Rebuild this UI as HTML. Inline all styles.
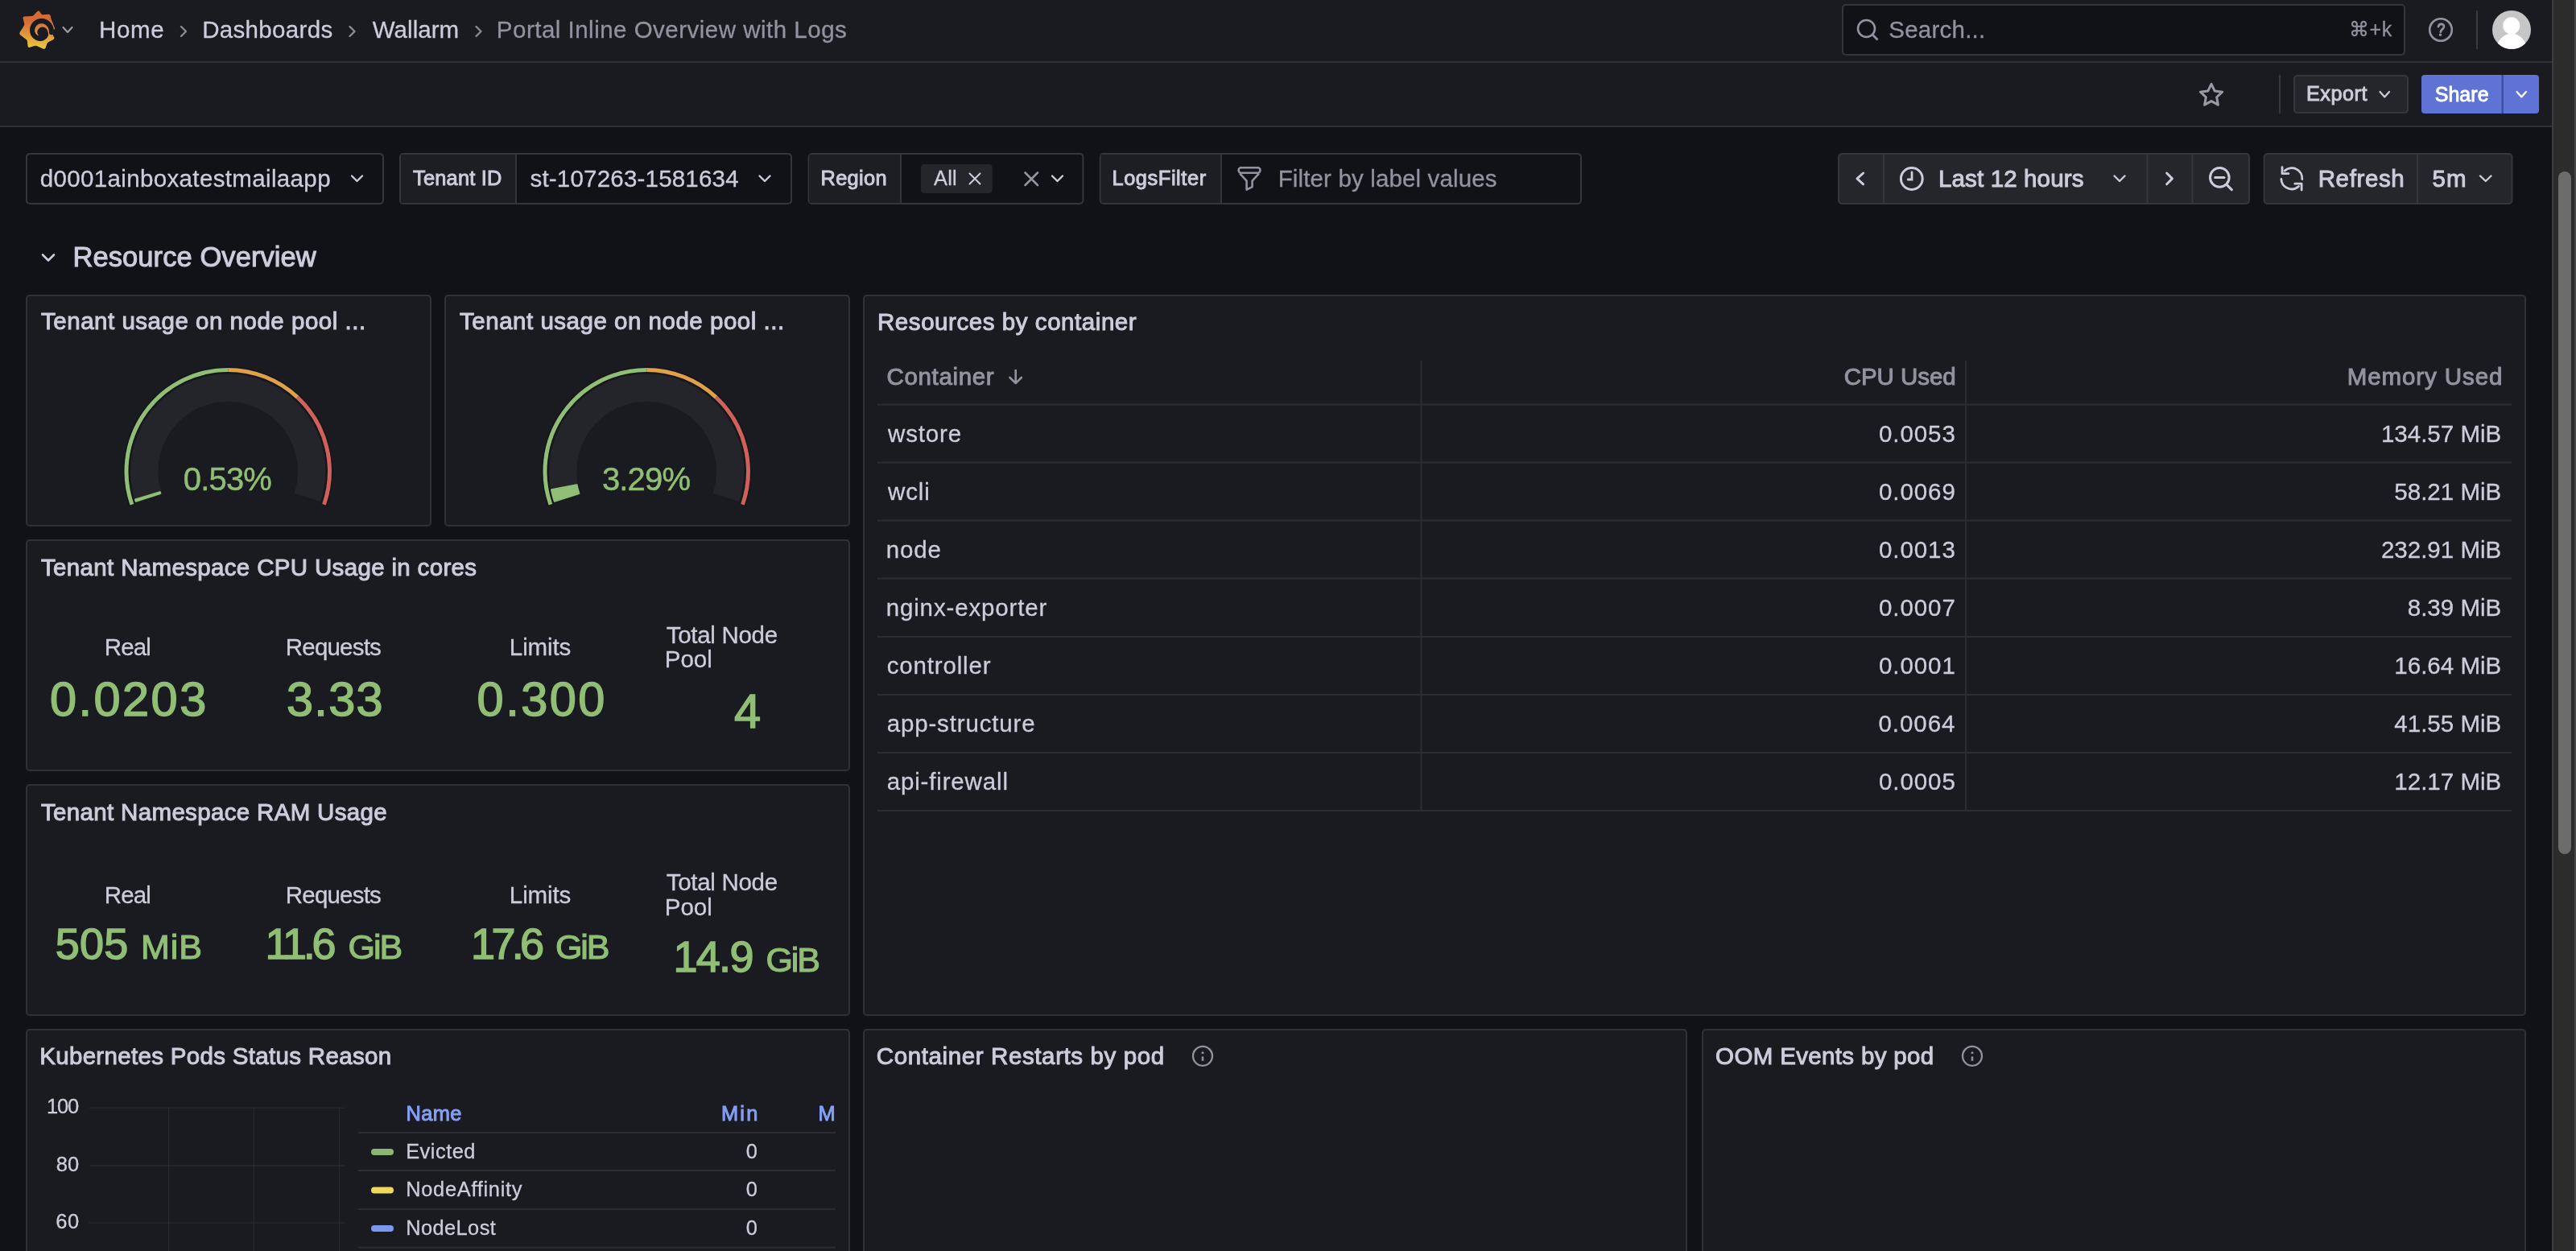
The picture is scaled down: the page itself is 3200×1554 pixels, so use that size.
<!DOCTYPE html>
<html><head><meta charset="utf-8"><title>Portal Inline Overview with Logs - Dashboards - Grafana</title>
<style>html,body{margin:0;padding:0;background:#111217;overflow:hidden}
svg{display:block;width:100vw;height:auto;will-change:transform} text{font-family:"Liberation Sans",sans-serif;white-space:pre}</style></head>
<body><svg width="3200" height="1554" viewBox="0 0 3200 1554">
<rect x="0.00" y="0.00" width="3200.00" height="1554.00" rx="0" fill="#111217"/>
<rect x="0.00" y="0.00" width="3170.00" height="76.00" rx="0" fill="#1a1b20"/>
<rect x="0.00" y="76.00" width="3170.00" height="2.00" rx="0" fill="#303137"/>
<rect x="0.00" y="78.00" width="3170.00" height="78.00" rx="0" fill="#1a1b20"/>
<rect x="0.00" y="156.00" width="3170.00" height="2.00" rx="0" fill="#303137"/>
<defs><linearGradient id="lg" x1="0" y1="0" x2="0" y2="1"><stop offset="0.25" stop-color="#d46a35"/><stop offset="0.55" stop-color="#dc9038"/><stop offset="1" stop-color="#ebcb3c"/></linearGradient></defs>
<path d="M46.24,14.27 Q48.05,12.40 49.45,14.59 L51.09,17.14 Q51.90,18.40 53.40,18.29 L60.01,17.78 Q62.40,17.60 62.82,19.96 L63.19,22.02 Q63.40,23.20 63.83,24.32 L68.01,35.05 Q68.30,35.80 68.00,36.54 L65.78,41.97 Q65.40,42.90 65.88,43.78 L67.04,45.90 Q68.20,48.00 66.08,49.13 L60.12,52.30 Q58.80,53.00 58.31,54.42 L56.66,59.15 Q55.80,61.60 53.43,60.54 L45.57,57.01 Q44.20,56.40 42.78,56.88 L37.07,58.83 Q34.80,59.60 34.55,57.21 L33.96,51.49 Q33.80,50.00 32.61,49.09 L25.30,43.46 Q23.40,42.00 24.69,39.98 L29.79,31.97 Q30.60,30.70 30.23,29.25 L28.60,22.92 Q28.00,20.60 30.40,20.49 L39.20,20.07 Q40.70,20.00 41.74,18.92 Z" fill="url(#lg)"/>
<path d="M63.98,40.08 L63.96,38.96 L63.87,37.86 L63.74,36.77 L63.51,35.71 L63.19,34.67 L62.78,33.66 L62.29,32.70 L61.73,31.78 L61.12,30.90 L60.44,30.07 L59.69,29.30 L58.87,28.61 L58.00,27.98 L57.07,27.44 L56.11,26.98 L55.10,26.60 L54.07,26.32 L53.01,26.12 L51.94,26.02 L50.87,26.03 L49.81,26.18 L48.77,26.41 L47.76,26.74 L46.79,27.14 L45.87,27.63 L44.99,28.20 L44.17,28.84 L43.41,29.54 L42.72,30.30 L42.11,31.12 L41.57,31.98 L41.11,32.88 L40.73,33.81 L40.44,34.77 L40.23,35.74 L40.11,36.73 L40.08,37.71 L40.14,38.69 L40.31,39.65 L40.55,40.58 L40.88,41.49 L41.28,42.35 L41.75,43.17 L42.28,43.93 L42.88,44.64 L43.53,45.29 L44.23,45.88 L44.97,46.40 L45.75,46.84 L46.56,47.22 L47.39,47.51 L48.23,47.73 L49.09,47.88 L49.94,47.95 L50.79,47.94 L51.63,47.81 L52.43,47.54 L53.19,47.20 L53.90,46.80 L54.55,46.34 L55.14,45.84 L55.68,45.30 L56.14,44.73 L56.54,44.12 L56.88,43.50 L57.02,42.77 L56.89,41.93 L56.65,41.14 L56.33,40.43 L55.92,39.80" fill="none" stroke="#1a1b20" stroke-width="6.2" stroke-linecap="round" stroke-linejoin="round"/>
<circle cx="52.8" cy="40.0" r="6.5" fill="#1a1b20"/>
<path d="M63.23,37.05 L72.18,36.10 L71.38,44.44 L62.99,41.00Z" fill="#1a1b20"/>
<path d="M78.5,34 L84.0,40 L89.5,34" fill="none" stroke="#9a9aa6" stroke-width="2.2" stroke-linecap="round" stroke-linejoin="round"/>
<text x="123.05" y="47.00" font-size="29.5" letter-spacing="0.603" fill="#ccccdc" stroke="#ccccdc" stroke-width="0.3">Home</text>
<path d="M225,33 L231,39.0 L225,45" fill="none" stroke="#8a8a96" stroke-width="2.4" stroke-linecap="round" stroke-linejoin="round"/>
<text x="251.15" y="47.00" font-size="29.5" letter-spacing="0.340" fill="#ccccdc" stroke="#ccccdc" stroke-width="0.3">Dashboards</text>
<path d="M434.5,33 L440.5,39.0 L434.5,45" fill="none" stroke="#8a8a96" stroke-width="2.4" stroke-linecap="round" stroke-linejoin="round"/>
<text x="462.75" y="47.00" font-size="29.5" letter-spacing="0.060" fill="#ccccdc" stroke="#ccccdc" stroke-width="0.3">Wallarm</text>
<path d="M591.5,33 L597.5,39.0 L591.5,45" fill="none" stroke="#8a8a96" stroke-width="2.4" stroke-linecap="round" stroke-linejoin="round"/>
<text x="616.85" y="47.00" font-size="29.5" letter-spacing="0.490" fill="#9292a0" stroke="#9292a0" stroke-width="0.3">Portal Inline Overview with Logs</text>
<rect x="2289.00" y="6.00" width="698.00" height="62.00" rx="4" fill="#111217" stroke="#35363c" stroke-width="2"/>
<circle cx="2318.5" cy="35.5" r="10.5" fill="none" stroke="#9292a0" stroke-width="2.6"/>
<line x1="2326" y1="43" x2="2332.5" y2="49.5" stroke="#9292a0" stroke-width="2.8"/>
<text x="2346.23" y="46.60" font-size="29.5" letter-spacing="0.241" fill="#9292a0" stroke="#9292a0" stroke-width="0.3">Search...</text>
<text x="2917.73" y="45.00" font-size="25" letter-spacing="0.667" fill="#9292a0" stroke="#9292a0" stroke-width="0.3">⌘+k</text>
<circle cx="3032" cy="37" r="13.8" fill="none" stroke="#9292a0" stroke-width="2.6"/>
<path d="M3029,33.2 Q3029.6,29.9 3032.6,29.9 Q3036,30 3035.9,33 Q3035.7,35.2 3033.6,36.6 Q3032.3,37.6 3031.8,39.8" fill="none" stroke="#9292a0" stroke-width="2.7" stroke-linecap="round"/>
<circle cx="3031.5" cy="43.2" r="1.7" fill="#9292a0"/>
<rect x="3076.00" y="13.00" width="2.00" height="48.00" rx="0" fill="#3a3b41"/>
<circle cx="3120" cy="37" r="24" fill="#c6c6c6"/>
<clipPath id="av"><circle cx="3120" cy="37" r="24"/></clipPath>
<g clip-path="url(#av)"><circle cx="3119.8" cy="31.9" r="10.6" fill="#fff"/><ellipse cx="3120" cy="62" rx="18.6" ry="20.4" fill="#fff"/></g>
<path d="M2747.00,104.30 L2751.12,112.93 L2760.60,114.18 L2753.66,120.77 L2755.41,130.17 L2747.00,125.61 L2738.59,130.17 L2740.34,120.77 L2733.40,114.18 L2742.88,112.93Z" fill="none" stroke="#9a9aa6" stroke-width="3" stroke-linejoin="round"/>
<rect x="2831.00" y="93.00" width="2.00" height="48.00" rx="0" fill="#35363c"/>
<rect x="2850.00" y="94.00" width="141.00" height="46.00" rx="4" fill="#25262b" stroke="#36373d" stroke-width="2"/>
<text x="2865.01" y="125.30" font-size="25.2" letter-spacing="0.520" fill="#ccccdc" stroke="#ccccdc" stroke-width="0.95">Export</text>
<path d="M2956.5,114 L2962.25,120.5 L2968,114" fill="none" stroke="#ccccdc" stroke-width="2.2" stroke-linecap="round" stroke-linejoin="round"/>
<rect x="3008.00" y="93.00" width="146.00" height="48.00" rx="4" fill="#5f73d5"/>
<rect x="3107.50" y="93.00" width="2.50" height="48.00" rx="0" fill="#3e4fa3"/>
<text x="3024.67" y="125.50" font-size="25" letter-spacing="0.046" fill="#ffffff" stroke="#ffffff" stroke-width="0.9">Share</text>
<path d="M3126.5,114 L3132.25,120.5 L3138,114" fill="none" stroke="#ffffff" stroke-width="2.2" stroke-linecap="round" stroke-linejoin="round"/>
<rect x="3170.00" y="0.00" width="30.00" height="1554.00" rx="0" fill="#2c2c2c"/>
<rect x="3170.00" y="0.00" width="2.00" height="1554.00" rx="0" fill="#3d3d3d"/>
<rect x="3198.00" y="0.00" width="2.00" height="1554.00" rx="0" fill="#474747"/>
<rect x="3178.00" y="213.00" width="16.00" height="848.00" rx="8" fill="#6c6c6c"/>
<rect x="33.00" y="191.00" width="443.00" height="62.00" rx="4" fill="#111217" stroke="#35363c" stroke-width="2"/>
<text x="49.73" y="232.00" font-size="29.5" letter-spacing="0.356" fill="#ccccdc" stroke="#ccccdc" stroke-width="0.3">d0001ainboxatestmailaapp</text>
<path d="M437,218.5 L443.5,225 L450,218.5" fill="none" stroke="#ccccdc" stroke-width="2.4" stroke-linecap="round" stroke-linejoin="round"/>
<rect x="497.00" y="191.00" width="486.00" height="62.00" rx="4" fill="#111217" stroke="#35363c" stroke-width="2"/>
<rect x="498.00" y="192.00" width="142.00" height="60.00" rx="0" fill="#1d1e23"/>
<rect x="640.00" y="192.00" width="2.00" height="60.00" rx="0" fill="#35363c"/>
<text x="513.08" y="230.10" font-size="25.4" letter-spacing="0.201" fill="#ccccdc" stroke="#ccccdc" stroke-width="0.95">Tenant ID</text>
<text x="658.49" y="232.00" font-size="29.5" letter-spacing="0.201" fill="#ccccdc" stroke="#ccccdc" stroke-width="0.3">st-107263-1581634</text>
<path d="M943.5,218.5 L950.0,225 L956.5,218.5" fill="none" stroke="#ccccdc" stroke-width="2.4" stroke-linecap="round" stroke-linejoin="round"/>
<rect x="1004.60" y="191.00" width="340.80" height="62.00" rx="4" fill="#111217" stroke="#35363c" stroke-width="2"/>
<rect x="1005.60" y="192.00" width="112.40" height="60.00" rx="0" fill="#1d1e23"/>
<rect x="1118.00" y="192.00" width="2.00" height="60.00" rx="0" fill="#35363c"/>
<text x="1019.49" y="230.10" font-size="25.4" letter-spacing="0.314" fill="#ccccdc" stroke="#ccccdc" stroke-width="0.95">Region</text>
<rect x="1144.00" y="204.00" width="88.60" height="36.00" rx="4" fill="#25262b"/>
<text x="1159.95" y="229.90" font-size="25.4" letter-spacing="0.273" fill="#ccccdc" stroke="#ccccdc" stroke-width="0.3">All</text>
<path d="M1204.5,215.5 L1217.5,228.5 M1217.5,215.5 L1204.5,228.5" fill="none" stroke="#ccccdc" stroke-width="2.0" stroke-linecap="round"/>
<path d="M1273.5,214.5 L1289,230 M1289,214.5 L1273.5,230" fill="none" stroke="#9292a0" stroke-width="2.6" stroke-linecap="round"/>
<path d="M1307,218.5 L1313.5,225 L1320,218.5" fill="none" stroke="#ccccdc" stroke-width="2.4" stroke-linecap="round" stroke-linejoin="round"/>
<rect x="1366.80" y="191.00" width="597.20" height="62.00" rx="4" fill="#111217" stroke="#35363c" stroke-width="2"/>
<rect x="1367.80" y="192.00" width="148.20" height="60.00" rx="0" fill="#1d1e23"/>
<rect x="1516.00" y="192.00" width="2.00" height="60.00" rx="0" fill="#35363c"/>
<text x="1381.49" y="230.10" font-size="25.4" letter-spacing="0.571" fill="#ccccdc" stroke="#ccccdc" stroke-width="0.95">LogsFilter</text>
<rect x="1538.6" y="208.3" width="26.9" height="6.4" rx="3.2" fill="none" stroke="#9292a0" stroke-width="2.6"/>
<path d="M1540.2,215.6 L1548.6,224.6 V235.6 L1555.6,232.2 V224.6 L1563.9,215.6" fill="none" stroke="#9292a0" stroke-width="2.6" stroke-linejoin="round"/>
<text x="1587.65" y="232.00" font-size="29.5" letter-spacing="0.144" fill="#9292a0" stroke="#9292a0" stroke-width="0.3">Filter by label values</text>
<rect x="2284.00" y="191.00" width="510.00" height="62.00" rx="4" fill="#25262b" stroke="#35363c" stroke-width="2"/>
<rect x="2339.00" y="192.00" width="2.00" height="60.00" rx="0" fill="#35363c"/>
<rect x="2666.50" y="192.00" width="2.00" height="60.00" rx="0" fill="#35363c"/>
<rect x="2722.50" y="192.00" width="2.00" height="60.00" rx="0" fill="#35363c"/>
<path d="M2314.6,215 L2307,221.9 L2314.6,228.8" fill="none" stroke="#ccccdc" stroke-width="3.0" stroke-linecap="round" stroke-linejoin="round"/>
<circle cx="2374.8" cy="222" r="13.4" fill="none" stroke="#ccccdc" stroke-width="3"/>
<path d="M2375,214 V223 H2370.2" fill="none" stroke="#ccccdc" stroke-width="2.8" stroke-linecap="round"/>
<text x="2408.00" y="232.00" font-size="29.5" letter-spacing="0.139" fill="#ccccdc" stroke="#ccccdc" stroke-width="1.0">Last 12 hours</text>
<path d="M2626.5,218.5 L2633.0,225 L2639.5,218.5" fill="none" stroke="#ccccdc" stroke-width="2.4" stroke-linecap="round" stroke-linejoin="round"/>
<path d="M2691.6,215 L2698.4,221.9 L2691.6,228.8" fill="none" stroke="#ccccdc" stroke-width="3.0" stroke-linecap="round" stroke-linejoin="round"/>
<circle cx="2757.3" cy="220.4" r="11.8" fill="none" stroke="#ccccdc" stroke-width="3"/>
<path d="M2751.6,220.4 H2763" stroke="#ccccdc" stroke-width="3" stroke-linecap="round"/>
<path d="M2766,229.4 L2772.3,235.6" stroke="#ccccdc" stroke-width="3.1" stroke-linecap="round"/>
<rect x="2812.60" y="191.00" width="307.90" height="62.00" rx="4" fill="#25262b" stroke="#35363c" stroke-width="2"/>
<rect x="3002.00" y="192.00" width="2.00" height="60.00" rx="0" fill="#35363c"/>
<path d="M2838.1,212.1 A13,13 0 0 1 2859.8,222.7" fill="none" stroke="#ccccdc" stroke-width="2.8" stroke-linecap="round"/>
<path d="M2833.8,222.3 A13,13 0 0 0 2855.5,231.5" fill="none" stroke="#ccccdc" stroke-width="2.8" stroke-linecap="round"/>
<path d="M2835,207.7 V215.7 H2842.9" fill="none" stroke="#ccccdc" stroke-width="2.8" stroke-linecap="round" stroke-linejoin="round"/>
<path d="M2850.8,228.2 H2859.1 V236" fill="none" stroke="#ccccdc" stroke-width="2.8" stroke-linecap="round" stroke-linejoin="round"/>
<text x="2879.70" y="232.00" font-size="29.5" letter-spacing="0.628" fill="#ccccdc" stroke="#ccccdc" stroke-width="1.0">Refresh</text>
<text x="3021.58" y="232.00" font-size="29.5" letter-spacing="0.969" fill="#ccccdc" stroke="#ccccdc" stroke-width="1.0">5m</text>
<path d="M3081,218.5 L3087.75,225 L3094.5,218.5" fill="none" stroke="#ccccdc" stroke-width="2.4" stroke-linecap="round" stroke-linejoin="round"/>
<path d="M53,316.5 L60.0,323.5 L67,316.5" fill="none" stroke="#ccccdc" stroke-width="2.6" stroke-linecap="round" stroke-linejoin="round"/>
<text x="90.53" y="331.20" font-size="34.5" letter-spacing="0.076" fill="#ccccdc" stroke="#ccccdc" stroke-width="1.05">Resource Overview</text>
<rect x="33.00" y="367.00" width="502.00" height="286.00" rx="4" fill="#1a1b20" stroke="#303137" stroke-width="2"/>
<rect x="553.00" y="367.00" width="502.00" height="286.00" rx="4" fill="#1a1b20" stroke="#303137" stroke-width="2"/>
<rect x="1073.00" y="367.00" width="2064.00" height="894.00" rx="4" fill="#1a1b20" stroke="#303137" stroke-width="2"/>
<rect x="33.00" y="671.00" width="1022.00" height="286.00" rx="4" fill="#1a1b20" stroke="#303137" stroke-width="2"/>
<rect x="33.00" y="975.00" width="1022.00" height="286.00" rx="4" fill="#1a1b20" stroke="#303137" stroke-width="2"/>
<rect x="33.00" y="1279.00" width="1022.00" height="590.00" rx="4" fill="#1a1b20" stroke="#303137" stroke-width="2"/>
<rect x="1073.00" y="1279.00" width="1022.00" height="590.00" rx="4" fill="#1a1b20" stroke="#303137" stroke-width="2"/>
<rect x="2115.00" y="1279.00" width="1022.00" height="590.00" rx="4" fill="#1a1b20" stroke="#303137" stroke-width="2"/>
<text x="51.04" y="409.30" font-size="29.5" letter-spacing="0.514" fill="#ccccdc" stroke="#ccccdc" stroke-width="1.0">Tenant usage on node pool ...</text>
<text x="571.04" y="409.30" font-size="29.5" letter-spacing="0.514" fill="#ccccdc" stroke="#ccccdc" stroke-width="1.0">Tenant usage on node pool ...</text>
<text x="1090.00" y="410.00" font-size="29.5" letter-spacing="0.559" fill="#ccccdc" stroke="#ccccdc" stroke-width="1.0">Resources by container</text>
<text x="51.04" y="714.50" font-size="29.5" letter-spacing="0.337" fill="#ccccdc" stroke="#ccccdc" stroke-width="1.0">Tenant Namespace CPU Usage in cores</text>
<text x="51.04" y="1018.50" font-size="29.5" letter-spacing="0.330" fill="#ccccdc" stroke="#ccccdc" stroke-width="1.0">Tenant Namespace RAM Usage</text>
<text x="49.20" y="1321.70" font-size="29.5" letter-spacing="0.319" fill="#ccccdc" stroke="#ccccdc" stroke-width="1.0">Kubernetes Pods Status Reason</text>
<text x="1088.82" y="1322.00" font-size="29.5" letter-spacing="0.610" fill="#ccccdc" stroke="#ccccdc" stroke-width="1.0">Container Restarts by pod</text>
<text x="2131.12" y="1322.00" font-size="29.5" letter-spacing="0.339" fill="#ccccdc" stroke="#ccccdc" stroke-width="1.0">OOM Events by pod</text>
<circle cx="1494" cy="1311.8" r="12" fill="none" stroke="#9292a0" stroke-width="2.3"/>
<line x1="1494" y1="1312.4" x2="1494" y2="1317.8" stroke="#9292a0" stroke-width="2.5"/>
<circle cx="1494" cy="1307.8" r="1.5" fill="#9292a0"/>
<circle cx="2450" cy="1311.8" r="12" fill="none" stroke="#9292a0" stroke-width="2.3"/>
<line x1="2450" y1="1312.4" x2="2450" y2="1317.8" stroke="#9292a0" stroke-width="2.5"/>
<circle cx="2450" cy="1307.8" r="1.5" fill="#9292a0"/>
<path d="M163.88,626.69 A126.2,126.2 0 1 1 402.52,626.69" fill="none" stroke="#141519" stroke-width="8" stroke-linecap="butt"/>
<path d="M163.88,626.69 A126.2,126.2 0 0 1 283.20,459.40" fill="none" stroke="#8fbe74" stroke-width="5" stroke-linecap="butt"/>
<path d="M283.20,459.40 A126.2,126.2 0 0 1 369.59,493.60" fill="none" stroke="#e0a04a" stroke-width="5" stroke-linecap="butt"/>
<path d="M369.59,493.60 A126.2,126.2 0 0 1 402.52,626.69" fill="none" stroke="#d0605a" stroke-width="5" stroke-linecap="butt"/>
<path d="M184.39,617.71 A103.9,103.9 0 1 1 382.01,617.71" fill="none" stroke="#24252a" stroke-width="34.2" stroke-linecap="butt"/>
<path d="M168.79,622.77 A120.3,120.3 0 0 1 168.07,620.48 L198.69,611.20 A88.3,88.3 0 0 0 199.22,612.89 Z" fill="#8fbe74" stroke="#8fbe74" stroke-width="2.2" stroke-linejoin="round"/>
<text x="227.80" y="609.30" font-size="40" letter-spacing="-0.819" fill="#8fbe74" stroke="#8fbe74" stroke-width="0.5">0.53%</text>
<path d="M683.88,626.69 A126.2,126.2 0 1 1 922.52,626.69" fill="none" stroke="#141519" stroke-width="8" stroke-linecap="butt"/>
<path d="M683.88,626.69 A126.2,126.2 0 0 1 803.20,459.40" fill="none" stroke="#8fbe74" stroke-width="5" stroke-linecap="butt"/>
<path d="M803.20,459.40 A126.2,126.2 0 0 1 889.59,493.60" fill="none" stroke="#e0a04a" stroke-width="5" stroke-linecap="butt"/>
<path d="M889.59,493.60 A126.2,126.2 0 0 1 922.52,626.69" fill="none" stroke="#d0605a" stroke-width="5" stroke-linecap="butt"/>
<path d="M704.39,617.71 A103.9,103.9 0 1 1 902.01,617.71" fill="none" stroke="#24252a" stroke-width="34.2" stroke-linecap="butt"/>
<path d="M688.79,622.77 A120.3,120.3 0 0 1 685.07,608.33 L716.49,602.29 A88.3,88.3 0 0 0 719.22,612.89 Z" fill="#8fbe74" stroke="#8fbe74" stroke-width="2.2" stroke-linejoin="round"/>
<text x="747.90" y="609.30" font-size="40" letter-spacing="-0.819" fill="#8fbe74" stroke="#8fbe74" stroke-width="0.5">3.29%</text>
<text x="129.85" y="814.00" font-size="29.5" letter-spacing="-0.907" fill="#ccccdc" stroke="#ccccdc" stroke-width="0.3">Real</text>
<text x="354.85" y="814.00" font-size="29.5" letter-spacing="-0.814" fill="#ccccdc" stroke="#ccccdc" stroke-width="0.3">Requests</text>
<text x="632.85" y="814.00" font-size="29.5" letter-spacing="-0.102" fill="#ccccdc" stroke="#ccccdc" stroke-width="0.3">Limits</text>
<text x="827.69" y="799.00" font-size="29.5" letter-spacing="-0.297" fill="#ccccdc" stroke="#ccccdc" stroke-width="0.3">Total Node</text>
<text x="825.85" y="829.00" font-size="29.5" letter-spacing="-0.031" fill="#ccccdc" stroke="#ccccdc" stroke-width="0.3">Pool</text>
<text x="61.89" y="888.60" font-size="59.5" letter-spacing="2.477" fill="#8fbe74" stroke="#8fbe74" stroke-width="1.5">0.0203</text>
<text x="355.89" y="888.60" font-size="59.5" letter-spacing="1.322" fill="#8fbe74" stroke="#8fbe74" stroke-width="1.5">3.33</text>
<text x="592.59" y="888.60" font-size="59.5" letter-spacing="2.486" fill="#8fbe74" stroke="#8fbe74" stroke-width="1.5">0.300</text>
<text x="911.93" y="903.70" font-size="59.5" letter-spacing="0.000" fill="#8fbe74" stroke="#8fbe74" stroke-width="1.5">4</text>
<text x="129.85" y="1121.90" font-size="29.5" letter-spacing="-0.907" fill="#ccccdc" stroke="#ccccdc" stroke-width="0.3">Real</text>
<text x="354.85" y="1121.90" font-size="29.5" letter-spacing="-0.814" fill="#ccccdc" stroke="#ccccdc" stroke-width="0.3">Requests</text>
<text x="632.85" y="1121.90" font-size="29.5" letter-spacing="-0.102" fill="#ccccdc" stroke="#ccccdc" stroke-width="0.3">Limits</text>
<text x="827.69" y="1106.00" font-size="29.5" letter-spacing="-0.297" fill="#ccccdc" stroke="#ccccdc" stroke-width="0.3">Total Node</text>
<text x="825.85" y="1137.00" font-size="29.5" letter-spacing="-0.031" fill="#ccccdc" stroke="#ccccdc" stroke-width="0.3">Pool</text>
<text x="68.86" y="1190.60" font-size="54" letter-spacing="0.140" fill="#8fbe74" stroke="#8fbe74" stroke-width="1.5">505</text>
<text x="175.04" y="1190.60" font-size="43" letter-spacing="0.956" fill="#8fbe74" stroke="#8fbe74" stroke-width="1.2">MiB</text>
<text x="329.38" y="1190.60" font-size="54" letter-spacing="-4.343" fill="#8fbe74" stroke="#8fbe74" stroke-width="1.5">11.6</text>
<text x="432.58" y="1190.60" font-size="43" letter-spacing="-2.030" fill="#8fbe74" stroke="#8fbe74" stroke-width="1.2">GiB</text>
<text x="585.08" y="1190.60" font-size="54" letter-spacing="-4.679" fill="#8fbe74" stroke="#8fbe74" stroke-width="1.5">17.6</text>
<text x="689.88" y="1190.60" font-size="43" letter-spacing="-2.030" fill="#8fbe74" stroke="#8fbe74" stroke-width="1.2">GiB</text>
<text x="836.38" y="1206.50" font-size="54" letter-spacing="-1.679" fill="#8fbe74" stroke="#8fbe74" stroke-width="1.5">14.9</text>
<text x="951.38" y="1206.50" font-size="43" letter-spacing="-2.030" fill="#8fbe74" stroke="#8fbe74" stroke-width="1.2">GiB</text>
<rect x="1090.00" y="501.60" width="2030.00" height="2.00" rx="0" fill="#2c2d33"/>
<rect x="1090.00" y="573.60" width="2030.00" height="2.00" rx="0" fill="#2c2d33"/>
<rect x="1090.00" y="645.60" width="2030.00" height="2.00" rx="0" fill="#2c2d33"/>
<rect x="1090.00" y="717.60" width="2030.00" height="2.00" rx="0" fill="#2c2d33"/>
<rect x="1090.00" y="790.00" width="2030.00" height="2.00" rx="0" fill="#2c2d33"/>
<rect x="1090.00" y="862.00" width="2030.00" height="2.00" rx="0" fill="#2c2d33"/>
<rect x="1090.00" y="934.00" width="2030.00" height="2.00" rx="0" fill="#2c2d33"/>
<rect x="1090.00" y="1006.00" width="2030.00" height="2.00" rx="0" fill="#2c2d33"/>
<rect x="1764.50" y="448.00" width="2.00" height="559.00" rx="0" fill="#2c2d33"/>
<rect x="2441.00" y="448.00" width="2.00" height="559.00" rx="0" fill="#2c2d33"/>
<text x="1101.52" y="477.80" font-size="29.5" letter-spacing="0.652" fill="#9292a0" stroke="#9292a0" stroke-width="1.0">Container</text>
<path d="M1261.7,460 V476 M1254.5,469 L1261.7,476.2 L1268.9,469" fill="none" stroke="#9292a0" stroke-width="2.6" stroke-linecap="round" stroke-linejoin="round"/>
<text x="2290.72" y="478.30" font-size="29.5" letter-spacing="-0.044" fill="#9292a0" stroke="#9292a0" stroke-width="1.0">CPU Used</text>
<text x="2915.70" y="478.30" font-size="29.5" letter-spacing="0.906" fill="#9292a0" stroke="#9292a0" stroke-width="1.0">Memory Used</text>
<text x="1103.01" y="549.20" font-size="29.5" letter-spacing="0.850" fill="#ccccdc" stroke="#ccccdc" stroke-width="0.3">wstore</text>
<text x="2333.92" y="549.20" font-size="29.5" letter-spacing="0.940" fill="#ccccdc" stroke="#ccccdc" stroke-width="0.3">0.0053</text>
<text x="2957.96" y="549.20" font-size="29.5" letter-spacing="0.000" fill="#ccccdc" stroke="#ccccdc" stroke-width="0.3">134.57 MiB</text>
<text x="1103.01" y="621.20" font-size="29.5" letter-spacing="0.850" fill="#ccccdc" stroke="#ccccdc" stroke-width="0.3">wcli</text>
<text x="2333.92" y="621.20" font-size="29.5" letter-spacing="0.940" fill="#ccccdc" stroke="#ccccdc" stroke-width="0.3">0.0069</text>
<text x="2974.37" y="621.20" font-size="29.5" letter-spacing="0.000" fill="#ccccdc" stroke="#ccccdc" stroke-width="0.3">58.21 MiB</text>
<text x="1100.71" y="693.20" font-size="29.5" letter-spacing="0.850" fill="#ccccdc" stroke="#ccccdc" stroke-width="0.3">node</text>
<text x="2333.92" y="693.20" font-size="29.5" letter-spacing="0.940" fill="#ccccdc" stroke="#ccccdc" stroke-width="0.3">0.0013</text>
<text x="2957.96" y="693.20" font-size="29.5" letter-spacing="0.000" fill="#ccccdc" stroke="#ccccdc" stroke-width="0.3">232.91 MiB</text>
<text x="1100.71" y="765.20" font-size="29.5" letter-spacing="0.850" fill="#ccccdc" stroke="#ccccdc" stroke-width="0.3">nginx-exporter</text>
<text x="2333.92" y="765.20" font-size="29.5" letter-spacing="0.940" fill="#ccccdc" stroke="#ccccdc" stroke-width="0.3">0.0007</text>
<text x="2990.77" y="765.20" font-size="29.5" letter-spacing="0.000" fill="#ccccdc" stroke="#ccccdc" stroke-width="0.3">8.39 MiB</text>
<text x="1101.63" y="837.20" font-size="29.5" letter-spacing="0.850" fill="#ccccdc" stroke="#ccccdc" stroke-width="0.3">controller</text>
<text x="2333.92" y="837.20" font-size="29.5" letter-spacing="0.940" fill="#ccccdc" stroke="#ccccdc" stroke-width="0.3">0.0001</text>
<text x="2974.37" y="837.20" font-size="29.5" letter-spacing="0.000" fill="#ccccdc" stroke="#ccccdc" stroke-width="0.3">16.64 MiB</text>
<text x="1101.63" y="909.20" font-size="29.5" letter-spacing="0.850" fill="#ccccdc" stroke="#ccccdc" stroke-width="0.3">app-structure</text>
<text x="2333.46" y="909.20" font-size="29.5" letter-spacing="0.940" fill="#ccccdc" stroke="#ccccdc" stroke-width="0.3">0.0064</text>
<text x="2974.37" y="909.20" font-size="29.5" letter-spacing="0.000" fill="#ccccdc" stroke="#ccccdc" stroke-width="0.3">41.55 MiB</text>
<text x="1101.63" y="981.20" font-size="29.5" letter-spacing="0.850" fill="#ccccdc" stroke="#ccccdc" stroke-width="0.3">api-firewall</text>
<text x="2333.92" y="981.20" font-size="29.5" letter-spacing="0.940" fill="#ccccdc" stroke="#ccccdc" stroke-width="0.3">0.0005</text>
<text x="2974.37" y="981.20" font-size="29.5" letter-spacing="0.000" fill="#ccccdc" stroke="#ccccdc" stroke-width="0.3">12.17 MiB</text>
<rect x="110.70" y="1375.70" width="317.70" height="1.00" rx="0" fill="#2a2b30"/>
<rect x="110.70" y="1447.50" width="317.70" height="1.00" rx="0" fill="#2a2b30"/>
<rect x="110.70" y="1518.50" width="317.70" height="1.00" rx="0" fill="#2a2b30"/>
<rect x="209.10" y="1376.00" width="1.00" height="178.00" rx="0" fill="#2a2b30"/>
<rect x="314.90" y="1376.00" width="1.00" height="178.00" rx="0" fill="#2a2b30"/>
<rect x="421.10" y="1376.00" width="1.00" height="178.00" rx="0" fill="#2a2b30"/>
<text x="58.06" y="1383.00" font-size="25.5" letter-spacing="-1.158" fill="#ccccdc" stroke="#ccccdc" stroke-width="0.3">100</text>
<text x="69.75" y="1454.90" font-size="25.5" letter-spacing="0.168" fill="#ccccdc" stroke="#ccccdc" stroke-width="0.3">80</text>
<text x="69.35" y="1525.50" font-size="25.5" letter-spacing="0.567" fill="#ccccdc" stroke="#ccccdc" stroke-width="0.3">60</text>
<rect x="444.80" y="1406.00" width="593.20" height="2.00" rx="0" fill="#2c2d33"/>
<rect x="444.80" y="1453.00" width="593.20" height="2.00" rx="0" fill="#2c2d33"/>
<rect x="444.80" y="1501.10" width="593.20" height="2.00" rx="0" fill="#2c2d33"/>
<rect x="444.80" y="1548.70" width="593.20" height="2.00" rx="0" fill="#2c2d33"/>
<text x="504.52" y="1391.60" font-size="25.4" letter-spacing="0.387" fill="#859ef6" stroke="#859ef6" stroke-width="1.0">Name</text>
<text x="895.92" y="1391.60" font-size="25.4" letter-spacing="2.241" fill="#859ef6" stroke="#859ef6" stroke-width="1.0">Min</text>
<clipPath id="lc"><rect x="0" y="0" width="1038.5" height="1554"/></clipPath>
<text x="1016.52" y="1391.60" font-size="25.4" letter-spacing="0.000" fill="#859ef6" stroke="#859ef6" stroke-width="1.0" clip-path="url(#lc)">M</text>
<rect x="461.00" y="1427.00" width="28.00" height="8.00" rx="4" fill="#8ab872"/>
<text x="504.17" y="1438.90" font-size="25.4" letter-spacing="0.503" fill="#ccccdc" stroke="#ccccdc" stroke-width="0.3">Evicted</text>
<text x="926.76" y="1438.90" font-size="25.4" letter-spacing="0.000" fill="#ccccdc" stroke="#ccccdc" stroke-width="0.3">0</text>
<rect x="461.00" y="1474.50" width="28.00" height="8.00" rx="4" fill="#eed95a"/>
<text x="504.17" y="1486.40" font-size="25.4" letter-spacing="0.718" fill="#ccccdc" stroke="#ccccdc" stroke-width="0.3">NodeAffinity</text>
<text x="926.76" y="1486.40" font-size="25.4" letter-spacing="0.000" fill="#ccccdc" stroke="#ccccdc" stroke-width="0.3">0</text>
<rect x="461.00" y="1522.00" width="28.00" height="8.00" rx="4" fill="#7b98ef"/>
<text x="504.17" y="1533.90" font-size="25.4" letter-spacing="0.424" fill="#ccccdc" stroke="#ccccdc" stroke-width="0.3">NodeLost</text>
<text x="926.76" y="1533.90" font-size="25.4" letter-spacing="0.000" fill="#ccccdc" stroke="#ccccdc" stroke-width="0.3">0</text>
</svg></body></html>
